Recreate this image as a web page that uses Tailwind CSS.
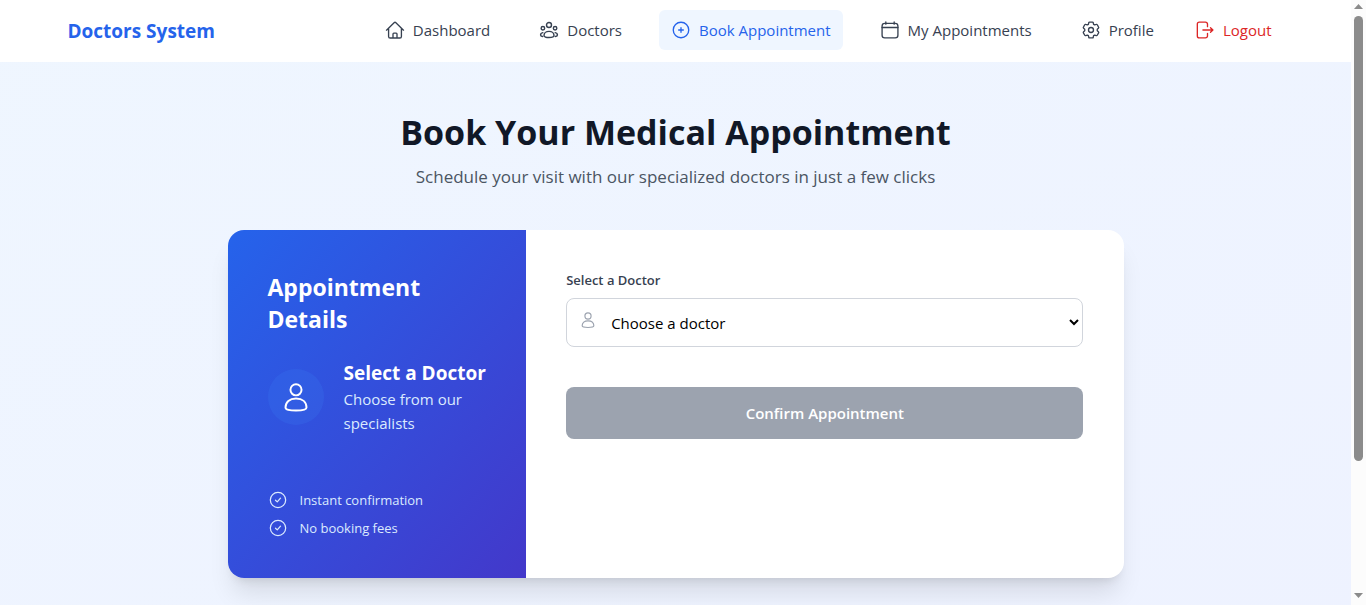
<!DOCTYPE html>
<html lang="en">
<head>
<meta charset="utf-8">
<meta name="viewport" content="width=device-width, initial-scale=1">
<title>Doctors System</title>
<script src="https://cdn.jsdelivr.net/npm/@tailwindcss/browser@4"></script>
</head>
<body class="flex h-screen overflow-hidden bg-white font-['Open_Sans','Noto_Sans',sans-serif] text-base text-gray-700">
<svg class="hidden" aria-hidden="true">
  <symbol id="person" viewBox="0 0 24 24"><circle cx="12" cy="7.2" r="3.7"/><path d="M5 19c0-3.700 2.700-6 7-6s7 2.300 7 6c0 1.400-2.500 2-7 2s-7-.6-7-2z"/></symbol>
  <symbol id="check" viewBox="0 0 24 24"><circle cx="12" cy="12" r="9.200"/><path d="M9 12.300l2.100 2 3.900-4.500"/></symbol>
</svg>
<div class="min-w-0 flex-1">
  <header class="bg-white">
    <nav class="mx-auto flex max-w-7xl items-center justify-between px-8 pt-[10px] pb-3">
      <a href="#" class="pt-px text-[19px] leading-7 font-bold text-[#2563eb]">Doctors System</a>
      <div class="flex items-center gap-[25px] text-[15px] leading-6 whitespace-nowrap text-[#374151]">
        <a href="#" class="flex items-center gap-2 rounded-md px-3 py-2">
          <svg class="size-5" viewBox="0 0 24 24" fill="none" stroke="currentColor" stroke-width="1.600" stroke-linecap="round" stroke-linejoin="round"><path d="M1.800 12.200L10.900 3.200a1.600 1.600 0 0 1 2.200 0l9.100 9M4.300 10.500v9.200a1.900 1.900 0 0 0 1.900 1.900h11.600a1.900 1.900 0 0 0 1.900-1.900v-9.200M9.600 21.500v-4.700a1 1 0 0 1 1-1h2.800a1 1 0 0 1 1 1v4.700"/></svg>Dashboard</a>
        <a href="#" class="flex items-center gap-2 rounded-md px-3 py-2">
          <svg class="size-5" viewBox="0 0 24 24" fill="none" stroke="currentColor" stroke-width="1.700" stroke-linecap="round" stroke-linejoin="round"><circle cx="12" cy="6" r="3"/><circle cx="4.700" cy="9.800" r="2.100"/><circle cx="19.300" cy="9.800" r="2.100"/><path d="M6 18.600c0-2.900 2.500-5 6-5s6 2.100 6 5c0 1.600-2.500 2.400-6 2.400s-6-.8-6-2.400zM4.600 15.200c-1.600.3-2.700 1.500-2.700 2.900 0 1 .9 1.500 2.400 1.700M19.400 15.200c1.600.3 2.700 1.500 2.700 2.900 0 1-.9 1.500-2.400 1.700"/></svg>Doctors</a>
        <a href="#" aria-current="page" class="flex items-center gap-2 rounded-md bg-blue-50 px-3 py-2 text-[#2563eb]">
          <svg class="size-5" viewBox="0 0 24 24" fill="none" stroke="currentColor" stroke-width="1.600" stroke-linecap="round"><circle cx="12" cy="12" r="9.300"/><path d="M12 9.200v5.600M9.200 12h5.600"/></svg>Book Appointment</a>
        <a href="#" class="flex items-center gap-2 rounded-md px-3 py-2">
          <svg class="size-5" viewBox="0 0 24 24" fill="none" stroke="currentColor" stroke-width="1.600" stroke-linecap="round" stroke-linejoin="round"><rect x="2.500" y="4" width="19" height="17.500" rx="3.200"/><path d="M2.500 9h19M7 2.400V5M17 2.400V5"/></svg>My Appointments</a>
        <a href="#" class="flex items-center gap-2 rounded-md px-3 py-2">
          <svg class="size-5" viewBox="0 0 24 24" fill="none" stroke="currentColor" stroke-width="1.600" stroke-linejoin="round"><circle cx="12" cy="12" r="3"/><path d="M10.300 2.500h3.400a1 1 0 0 1 1 .8l.4 1.900 1.300.7 1.900-.6a1 1 0 0 1 1.200.4l1.600 2.800a1 1 0 0 1-.2 1.300L19.500 11v2l1.400 1.200a1 1 0 0 1 .2 1.300l-1.600 2.800a1 1 0 0 1-1.200.4l-1.900-.6-1.300.7-.4 1.900a1 1 0 0 1-1 .8h-3.400a1 1 0 0 1-1-.8l-.4-1.900-1.300-.7-1.900.6a1 1 0 0 1-1.200-.4l-1.600-2.800a1 1 0 0 1 .2-1.300L4.500 13v-2L3.100 9.800a1 1 0 0 1-.2-1.300l1.600-2.800a1 1 0 0 1 1.200-.4l1.900.6 1.300-.7.4-1.900a1 1 0 0 1 1-.8z"/></svg>Profile</a>
        <button type="button" class="-ml-2 flex items-center gap-2 rounded-md px-3 py-2 text-[#dc2626]">
          <svg class="size-5" viewBox="0 0 24 24" fill="none" stroke="currentColor" stroke-width="1.600" stroke-linecap="round" stroke-linejoin="round"><path d="M15 8V4.900a2.400 2.400 0 0 0-2.400-2.400H5.200a2.400 2.400 0 0 0-2.400 2.400v14.200a2.400 2.400 0 0 0 2.400 2.400h7.400a2.400 2.400 0 0 0 2.400-2.400V16M9.500 12H21.500M18.600 9.200l2.900 2.800-2.900 2.800"/></svg>Logout</button>
      </div>
    </nav>
  </header>
  <main class="min-h-screen bg-linear-to-br from-blue-50 to-indigo-50 px-8 pt-[50px] pb-12">
    <div class="mx-auto max-w-4xl">
      <div class="mb-[39px] text-center">
        <h1 class="mb-[11px] text-[34px] leading-10 font-bold text-[#111827]">Book Your Medical Appointment</h1>
        <p class="text-[17px] leading-7 text-[#4b5563]">Schedule your visit with our specialized doctors in just a few clicks</p>
      </div>
      <div class="flex overflow-hidden rounded-2xl bg-white shadow-xl">
        <section class="w-1/3 bg-[linear-gradient(to_bottom_right,#2563eb,#4338ca)] px-10 pt-[41px] pb-10 text-white">
          <h2 class="mb-6 text-[23px] leading-8 font-bold">Appointment Details</h2>
          <div class="mb-[55px] flex items-center gap-5">
            <div class="flex size-14 shrink-0 items-center justify-center rounded-full bg-[#3b82f6]/20">
              <svg class="size-9" fill="none" stroke="currentColor" stroke-width="1.300"><use href="#person"/></svg>
            </div>
            <div class="whitespace-nowrap">
              <h3 class="text-[19px] leading-7 font-bold">Select a Doctor</h3>
              <p class="text-[15px] leading-6 text-blue-100">Choose from our<br>specialists</p>
            </div>
          </div>
          <ul class="flex flex-col gap-2 text-[13px] leading-5 text-blue-100">
            <li class="flex items-center gap-3"><svg class="size-5" fill="none" stroke="currentColor" stroke-width="1.500" stroke-linecap="round" stroke-linejoin="round"><use href="#check"/></svg>Instant confirmation</li>
            <li class="flex items-center gap-3"><svg class="size-5" fill="none" stroke="currentColor" stroke-width="1.500" stroke-linecap="round" stroke-linejoin="round"><use href="#check"/></svg>No booking fees</li>
          </ul>
        </section>
        <form class="w-2/3 p-10">
          <label for="doctor" class="mb-2 block text-[13px] leading-5 font-semibold text-[#374151]">Select a Doctor</label>
          <div class="relative mb-10">
            <svg class="pointer-events-none absolute top-3 left-3 size-5 text-[#9ca3af]" fill="none" stroke="currentColor" stroke-width="1.400"><use href="#person"/></svg>
            <select id="doctor" class="block h-[49px] w-full rounded-lg border border-gray-300 bg-white pl-10 text-[15px] text-black">
              <option>Choose a doctor</option>
            </select>
          </div>
          <button type="submit" disabled class="block w-full rounded-lg bg-[#9ca3af] py-[14px] text-[15px] leading-6 font-semibold text-white">Confirm Appointment</button>
        </form>
      </div>
    </div>
  </main>
</div>
<div class="flex w-[15px] shrink-0 flex-col items-center bg-[#fcfcfc]" aria-hidden="true">
  <svg class="h-4 w-[9px] shrink-0" viewBox="0 0 9 16" fill="#8b8b8b"><path d="M0 9l4.500-5L9 9z"/></svg>
  <div class="h-[73.6%] w-[9px] rounded-full bg-[#8b8b8b]"></div>
  <svg class="mt-auto h-4 w-[9px] shrink-0" viewBox="0 0 9 16" fill="#8b8b8b"><path d="M0 4l4.500 5L9 4z"/></svg>
</div>
</body>
</html>
